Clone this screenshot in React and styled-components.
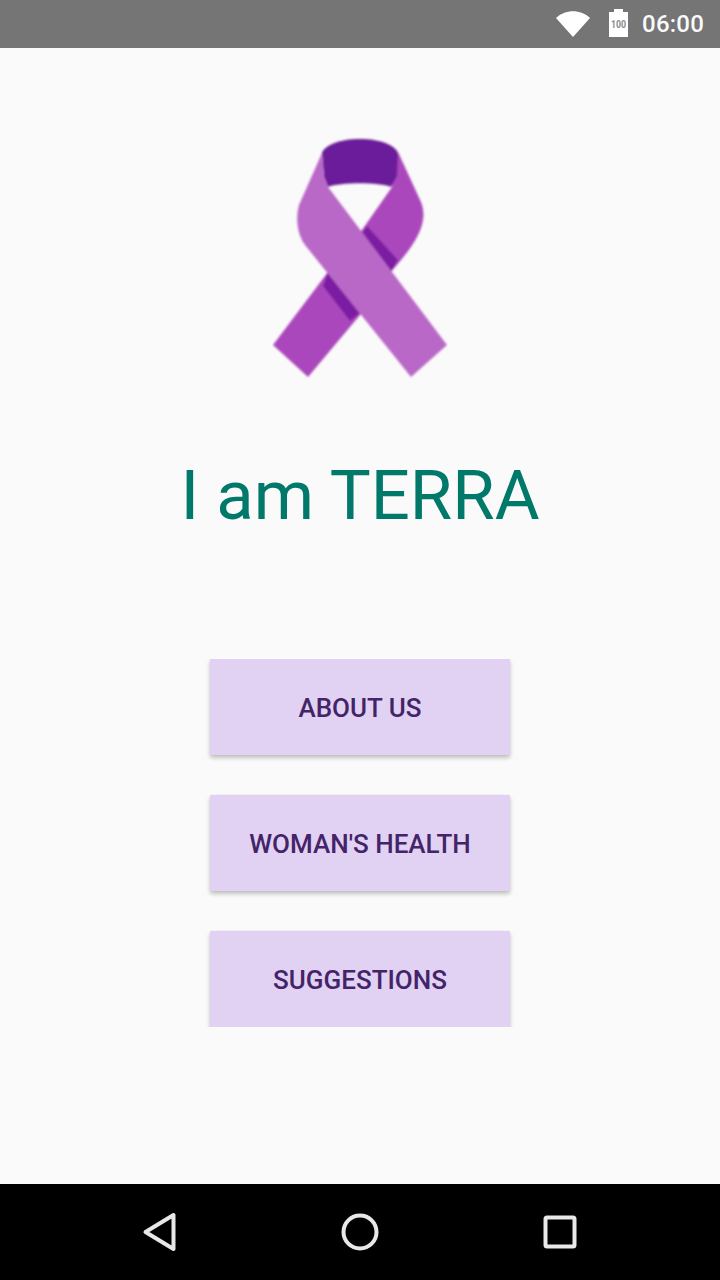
import React from 'react';
import styled, { createGlobalStyle } from 'styled-components';

const GlobalStyle = createGlobalStyle`
  html, body { margin: 0; padding: 0; background: #fafafa; }
  body { font-family: Roboto, "Liberation Sans", sans-serif; }
`;

const Screen = styled.div`
  width: 720px;
  height: 1280px;
  display: flex;
  flex-direction: column;
  overflow: hidden;
`;

const StatusBar = styled.div`
  height: 48px;
  background: #757575;
  display: flex;
  align-items: center;
  justify-content: flex-end;
  padding-right: 16px;
`;

const WifiIcon = styled.svg`
  width: 36px;
  height: 28px;
  margin-right: 18px;
`;

const BatteryIcon = styled.svg`
  width: 19px;
  height: 28px;
  margin: 0 14px 2px 0;
`;

const Clock = styled.span`
  font-size: 24px;
  font-weight: 500;
  letter-spacing: 0.2px;
  color: #fafafa;
  line-height: 48px;
`;

const Content = styled.main`
  flex: 1;
  background: #fafafa;
  display: flex;
  flex-direction: column;
  align-items: center;
`;

const Ribbon = styled.svg`
  width: 180px;
  height: 244px;
  margin-top: 88px;
  display: block;
`;

const Title = styled.h1`
  margin: 74px 0 0;
  font-size: 68.8px;
  font-weight: 400;
  line-height: 84px;
  color: #00796b;
`;

const ButtonClip = styled.div`
  margin-top: 121px;
  padding: 0 10px;
  height: 368px;
  display: flex;
  flex-direction: column;
  gap: 40px;
  overflow: hidden;
`;

const MenuButton = styled.button`
  flex: none;
  width: 300px;
  height: 96px;
  border: 0;
  border-radius: 1px;
  padding: 2px 0 0;
  background: #e1d1f3;
  color: #432468;
  font-family: inherit;
  font-size: 26px;
  font-weight: 500;
  box-shadow: 0 3px 4px rgba(0, 0, 0, 0.22), 0 0 2px rgba(0, 0, 0, 0.1);
`;

const NavBar = styled.nav`
  height: 96px;
  background: #000;
  display: grid;
  grid-template-columns: 40px 40px 40px;
  justify-content: space-between;
  align-items: center;
  padding: 0 140px;
`;

const NavIcon = styled.svg`
  width: 40px;
  height: 40px;
  fill: none;
  stroke: #e8e8e8;
  stroke-width: 4;
  stroke-linejoin: round;
`;

const buttons = ['ABOUT US', "WOMAN'S HEALTH", 'SUGGESTIONS'];

const App = () => {
  return (
    <Screen>
      <GlobalStyle />
      <StatusBar>
        <WifiIcon viewBox="0 0 36 28">
          <path d="M1 8 C10 -1 26 -1 35 8 L18 27 Z" fill="#ffffff" />
        </WifiIcon>
        <BatteryIcon viewBox="0 0 19 28">
          <path d="M5 0 H14 V3 H19 V28 H0 V3 H5 Z" fill="#ffffff" />
          <text x="9.500" y="18.500" textAnchor="middle" fontFamily="Roboto, sans-serif" fontSize="10" fontWeight="700" fill="#8a8a8a" textLength="15" lengthAdjust="spacingAndGlyphs">100</text>
        </BatteryIcon>
        <Clock>06:00</Clock>
      </StatusBar>

      <Content>
        <Ribbon viewBox="270 136 180 244">
          <defs>
            <filter id="soft" x="-5%" y="-5%" width="110%" height="110%">
              <feGaussianBlur stdDeviation="0.9" />
            </filter>
          </defs>
          <g filter="url(#soft)">
            {/* strand going down to the left */}
            <path d="M398 152 L421 202 C425 212 424 222 419 233 C412 248 402 259 390 273 L360 315 L308 377 L273 345 L328 272 L362 230 L392 187 Z" fill="#ab47bc" />
            {/* darker folds */}
            <path d="M367 226 L398 260 L390 273 L360 236 Z" fill="#7b1fa2" />
            <path d="M328 272 L360 313 L350 321 L323 286 Z" fill="#7b1fa2" />
            {/* back of the loop */}
            <path d="M322 153 C325 145 340 139 360 139 C380 139 395 145 398 153 L397 176 L391 187 C380 182 340 182 328 187 L324 177 Z" fill="#6a1b9a" />
            {/* strand going down to the right */}
            <path d="M322 153 L324 177 L328 187 L447 345 L411 377 L305 245 C296 232 296 216 299 205 Z" fill="#ba68c8" />
          </g>
        </Ribbon>

        <Title>I am TERRA</Title>

        <ButtonClip>
          {buttons.map((label) => (
            <MenuButton key={label}>{label}</MenuButton>
          ))}
        </ButtonClip>
      </Content>

      <NavBar>
        <NavIcon viewBox="0 0 40 40">
          <path d="M33.500 3 V37 L5.500 20 Z" />
        </NavIcon>
        <NavIcon viewBox="0 0 40 40">
          <circle cx="20" cy="20" r="16.500" />
        </NavIcon>
        <NavIcon viewBox="0 0 40 40">
          <rect x="5.500" y="5.500" width="29" height="29" rx="1.500" />
        </NavIcon>
      </NavBar>
    </Screen>
  );
};

export default App;
